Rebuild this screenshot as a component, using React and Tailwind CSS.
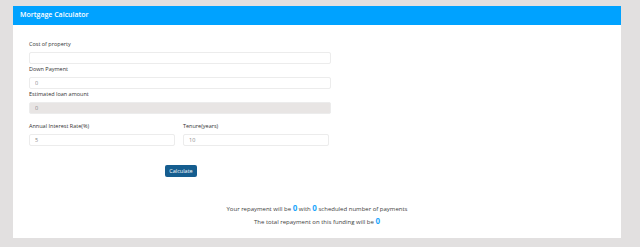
import React, { useState } from 'react';

function Field({ label, value, onChange, disabled, className = '' }) {
  return (
    <div className={className}>
      <label className="block h-[8px] leading-[8px] text-[5.5px] font-medium text-[#333] mb-[4px]">{label}</label>
      <input
        type="text"
        value={value}
        onChange={(e) => onChange && onChange(e.target.value)}
        disabled={disabled}
        className={`block w-full h-[12px] px-[5px] text-[5.5px] text-[#888] border border-[#ececec] rounded-[2px] outline-none ${disabled ? 'bg-[#e8e5e4] border-[#e8e5e4]' : 'bg-white'}`}
      />
    </div>
  );
}

export default function App() {
  const [cost, setCost] = useState('');
  const [down, setDown] = useState('0');
  const [rate, setRate] = useState('5');
  const [tenure, setTenure] = useState('10');

  return (
    <div className="min-h-[247px] bg-[#e2e0e0] pt-[6px] pb-[9px] pl-[13px] pr-[19px]" style={{ fontFamily: '"Open Sans", "Noto Sans", sans-serif' }}>
      <div className="bg-white h-[232px]">
        {/* Cabeçalho */}
        <div className="h-[19px] bg-[#00a2ff] flex items-center pl-[7px]">
          <span className="text-white font-semibold text-[7px]">Mortgage Calculator</span>
        </div>

        <div className="pl-[16px] pt-[15px]">
          <div className="w-[302px]">
            <Field label="Cost of property" value={cost} onChange={setCost} />
            <Field label="Down Payment" value={down} onChange={setDown} className="mt-[1px]" />
            <Field label="Estimated loan amount" value="0" disabled className="mt-[1px]" />
          </div>

          <div className="flex gap-[8px] w-[300px] mt-[8px]">
            <Field label="Annual Interest Rate(%)" value={rate} onChange={setRate} className="w-[146px]" />
            <Field label="Tenure(years)" value={tenure} onChange={setTenure} className="w-[146px]" />
          </div>

          <button className="ml-[136px] mt-[19px] w-[32px] h-[12px] bg-[#155d8f] text-white text-[5.5px] rounded-[2px]">
            Calculate
          </button>
        </div>

        {/* Resultado */}
        <div className="mt-[23px] text-center text-[#3d3d3d] text-[6px] font-medium leading-[11px]">
          <p>
            Your repayment will be <span className="text-[#1ea7fd] text-[8px] font-bold">0</span> with{' '}
            <span className="text-[#1ea7fd] text-[8px] font-bold">0</span> scheduled number of payments
          </p>
          <p>
            The total repayment on this funding will be <span className="text-[#1ea7fd] text-[8px] font-bold">0</span>
          </p>
        </div>
      </div>
    </div>
  );
}
